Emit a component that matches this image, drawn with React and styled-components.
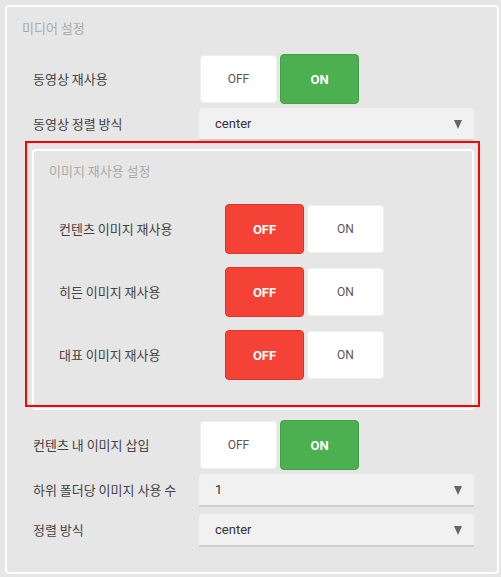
import styled, { createGlobalStyle } from "styled-components";

const GlobalStyle = createGlobalStyle`
  html, body {
    margin: 0;
    padding: 0;
    background: #e6e6e6;
  }
  body {
    font-family: Roboto, "Noto Sans CJK KR", sans-serif;
  }
`;

const Page = styled.div`
  padding: 5px 2px 3px 5px;
`;

const Fieldset = styled.section`
  position: relative;
  border: 2px solid #fff;
  border-radius: 4px;
  padding: ${(p) => p.$pad};
  display: flex;
  flex-direction: column;
`;

const Legend = styled.div`
  font-family: "Noto Sans CJK KR", sans-serif;
  font-size: 13px;
  line-height: 20px;
  height: 20px;
  color: #aaa;
`;

const Body = styled.div`
  display: flex;
  flex-direction: column;
  padding-left: ${(p) => p.$indent}px;
  margin-top: ${(p) => p.$top}px;
`;

const Row = styled.div`
  display: flex;
  align-items: center;
  height: ${(p) => p.$h}px;
  margin-bottom: ${(p) => p.$mb || 0}px;
`;

const Label = styled.div`
  width: 166px;
  flex: none;
  font-family: "Noto Sans CJK KR", sans-serif;
  font-size: 13px;
  color: #444;
  margin-top: -2px;
`;

const Toggle = styled.div`
  display: flex;
  align-items: center;
  gap: 2px;
`;

const ToggleBtn = styled.div`
  box-sizing: border-box;
  display: flex;
  align-items: center;
  justify-content: center;
  border-radius: 4px;
  font-family: Roboto, sans-serif;
  ${(p) =>
    p.$active
      ? `
    width: 79px;
    height: 50px;
    background: ${p.$color === "red" ? "#f44336" : "#4caf50"};
    border: 1px solid ${p.$color === "red" ? "#d8372c" : "#43a047"};
    color: #fff;
    font-weight: 700;
    font-size: 13px;
  `
      : `
    width: 77px;
    height: 48px;
    margin: 0 1px;
    background: #fff;
    border: 1px solid #f0f0f0;
    color: #555;
    font-size: 12px;
  `}
`;

const Select = styled.div`
  box-sizing: border-box;
  width: 276px;
  height: 33px;
  display: flex;
  align-items: center;
  justify-content: space-between;
  padding: 0 12px 0 16px;
  background: #f1f1f1;
  border-radius: 4px 4px 0 0;
  border-bottom: 2px solid #cfcfcf;
  font-family: Roboto, sans-serif;
  font-size: 13px;
  color: #333;
`;

const Caret = styled.span`
  width: 0;
  height: 0;
  border-left: 4.5px solid transparent;
  border-right: 4.5px solid transparent;
  border-top: 9px solid #666;
  margin-top: 2px;
`;

const Highlight = styled.div`
  position: absolute;
  left: -9px;
  top: -10px;
  right: -8px;
  bottom: 1px;
  border: 2px solid #ff0000;
  pointer-events: none;
`;

const ToggleRow = ({ label, value, offColor }) => (
  <Row $h={50} $mb={4}>
    <Label>{label}</Label>
    <Toggle>
      <ToggleBtn $active={!value} $color={offColor}>
        OFF
      </ToggleBtn>
      <ToggleBtn $active={value} $color="green">
        ON
      </ToggleBtn>
    </Toggle>
  </Row>
);

const SelectRow = ({ label, value, mb }) => (
  <Row $h={33} $mb={mb}>
    <Label>{label}</Label>
    <Select>
      <span>{value}</span>
      <Caret />
    </Select>
  </Row>
);

const App = () => {
  return (
    <>
      <GlobalStyle />
      <Page>
        <Fieldset $pad="11px 23px 25px 15px">
          <Legend>미디어 설정</Legend>
          <Body $indent={11} $top={16}>
            <ToggleRow label="동영상 재사용" value={true} />
            <SelectRow label="동영상 정렬 방식" value="center" mb={8} />
            <Fieldset $pad="10px 15px 24px 15px" style={{ marginLeft: -1 }}>
              <Highlight />
              <Legend>이미지 재사용 설정</Legend>
              <Body $indent={10} $top={23}>
                <ToggleRow label="컨텐츠 이미지 재사용" value={false} offColor="red" />
                <Row $h={9} />
                <ToggleRow label="히든 이미지 재사용" value={false} offColor="red" />
                <Row $h={9} />
                <ToggleRow label="대표 이미지 재사용" value={false} offColor="red" />
              </Body>
            </Fieldset>
            <Row $h={10} />
            <ToggleRow label="컨텐츠 내 이미지 삽입" value={true} />
            <SelectRow label="하위 폴더당 이미지 사용 수" value="1" mb={7} />
            <SelectRow label="정렬 방식" value="center" />
          </Body>
        </Fieldset>
      </Page>
    </>
  );
};

export default App;
